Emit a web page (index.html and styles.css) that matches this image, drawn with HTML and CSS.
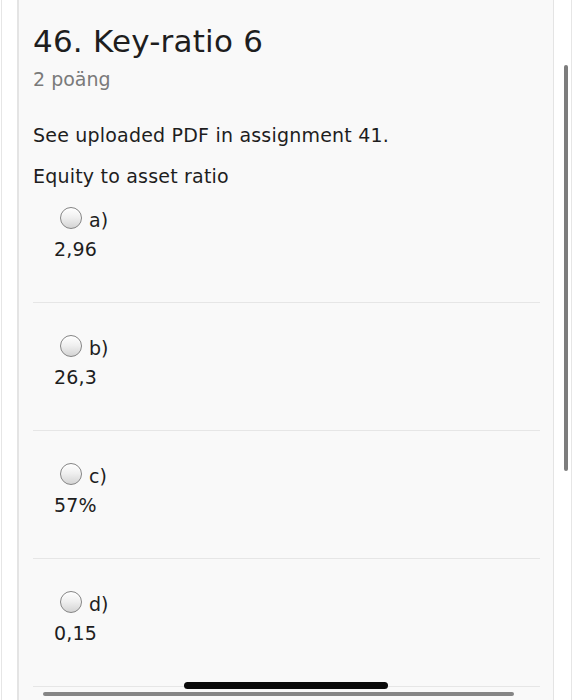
FILE: index.html
```html
<!DOCTYPE html>
<html lang="sv">
<head>
<meta charset="utf-8">
<title>46. Key-ratio 6</title>
<link rel="stylesheet" href="styles.css">
</head>
<body>
<div class="page">
  <div class="edge-left"></div>
  <main class="panel">
    <h1 class="title">46. Key-ratio 6</h1>
    <div class="points">2 poäng</div>
    <p class="question">See uploaded PDF in assignment 41.</p>
    <p class="question-sub">Equity to asset ratio</p>
    <ul class="answers">
      <li class="answer first">
        <div class="answer-row"><span class="radio"></span><span class="answer-label">a)</span></div>
        <div class="answer-text">2,96</div>
      </li>
      <li class="answer">
        <div class="answer-row"><span class="radio"></span><span class="answer-label">b)</span></div>
        <div class="answer-text">26,3</div>
      </li>
      <li class="answer">
        <div class="answer-row"><span class="radio"></span><span class="answer-label">c)</span></div>
        <div class="answer-text">57%</div>
      </li>
      <li class="answer">
        <div class="answer-row"><span class="radio"></span><span class="answer-label">d)</span></div>
        <div class="answer-text">0,15</div>
      </li>
      <li class="answer last"></li>
    </ul>
  </main>
  <div class="edge-right"></div>
  <div class="vscroll"></div>
  <div class="hscroll"></div>
  <div class="home-indicator"></div>
</div>
</body>
</html>
```

FILE: styles.css
```css
html, body {
  margin: 0;
  padding: 0;
  background: #ffffff;
}

body {
  font-family: "DejaVu Sans", Verdana, sans-serif;
  color: #222222;
}

.page {
  position: relative;
  display: flex;
  height: 700px;
  overflow: hidden;
}

.edge-left {
  width: 15px;
  margin-left: 1px;
  border-left: 1px solid #e6e6e6;
  flex: none;
}

.panel {
  flex: none;
  width: 507px;
  padding: 23px 13px 0 14px;
  background: #f9f9f9;
  border-left: 2px solid #e4e4e4;
  border-right: 1px solid #e4e4e4;
}

.edge-right {
  flex: 1;
  border-right: 1px solid #e6e6e6;
}

.title {
  margin: 0;
  font-size: 31px;
  font-weight: normal;
  line-height: 37px;
  letter-spacing: 0.2px;
  color: #1e1e1e;
}

.points {
  margin-top: 8px;
  font-size: 19px;
  line-height: 22px;
  color: #7a7a7a;
}

.question,
.question-sub {
  margin: 0;
  font-size: 19px;
  line-height: 24px;
  letter-spacing: 0.2px;
  color: #1e1e1e;
}

.question {
  margin-top: 33px;
}

.question-sub {
  margin-top: 17px;
}

.answers {
  list-style: none;
  margin: 20px 0 0;
  padding: 0;
}

.answer {
  padding: 33px 0 41px;
  border-top: 1px solid #e6e6e6;
}

.answer.first {
  padding-top: 0;
  border-top: none;
}

.answer.last {
  padding: 0;
  height: 40px;
}

.answer-row {
  display: flex;
  align-items: flex-start;
  gap: 7px;
  padding-left: 27px;
  font-size: 19px;
  line-height: 24px;
  color: #1e1e1e;
}

.radio {
  flex: none;
  width: 20px;
  height: 20px;
  margin-top: -1px;
  border: 1px solid #858585;
  border-radius: 50%;
  background: linear-gradient(to bottom, #ffffff 0%, #f0f0f0 45%, #d4d4d4 100%);
  box-shadow: inset 0 1px 1px rgba(255, 255, 255, 0.9);
}

.answer-text {
  margin-top: 5px;
  padding-left: 21px;
  font-size: 19px;
  line-height: 24px;
  letter-spacing: 0.2px;
  color: #1e1e1e;
}

.vscroll {
  position: absolute;
  left: 564px;
  top: 65px;
  width: 4px;
  height: 406px;
  border-radius: 2px;
  background: #7d7d7d;
}

.hscroll {
  position: absolute;
  left: 43px;
  top: 692px;
  width: 471px;
  height: 4px;
  border-radius: 2px;
  background: #858585;
}

.home-indicator {
  position: absolute;
  left: 184px;
  top: 682px;
  width: 204px;
  height: 7px;
  border-radius: 4px;
  background: #0a0a0a;
}
```
